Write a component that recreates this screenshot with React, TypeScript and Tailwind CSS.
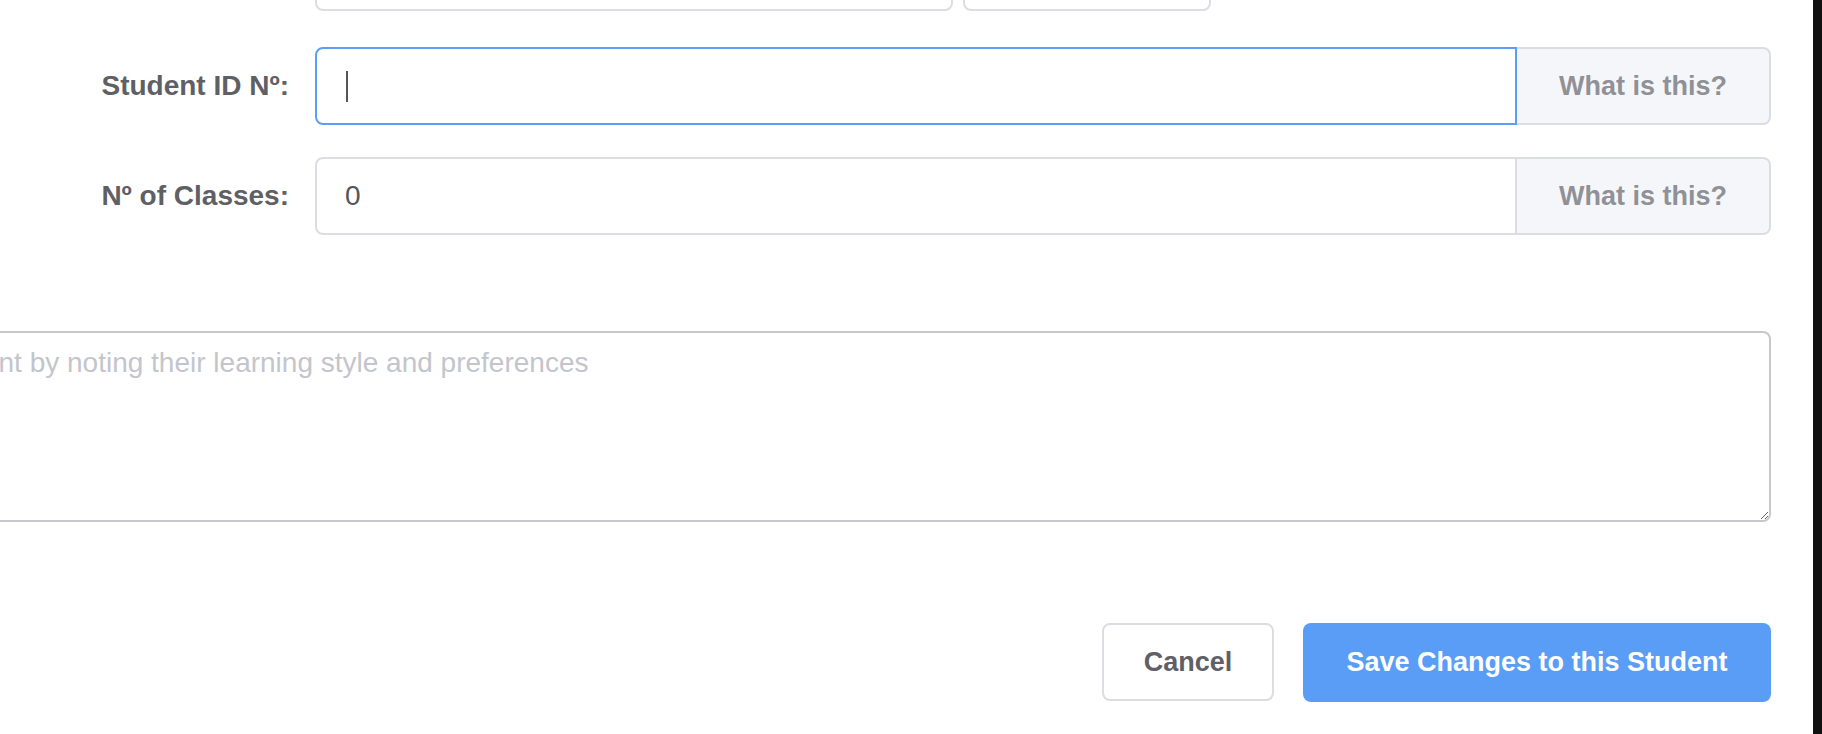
import React from "react";

function Label({ children }: { children: React.ReactNode }) {
  return (
    <div className="flex w-[700px] shrink-0 items-center justify-end pb-[1px] pr-0 text-[28px] font-bold text-[#5f6066]">
      {children}
    </div>
  );
}

function Addon() {
  return (
    <div className="flex w-[254px] shrink-0 items-center justify-center rounded-r-lg border-2 border-l-0 border-[#dcdde3] bg-[#f5f6fa] text-[27px] font-bold text-[#8f9196]">
      What is this?
    </div>
  );
}

export default function App() {
  return (
    <div className="flex h-[734px] w-full overflow-hidden bg-white font-['Liberation_Sans',Arial,sans-serif]">
      <div className="flex-1 overflow-hidden">
        <div className="ml-[-411px] mt-[-67px] flex flex-col pr-[42px]">
          {/* partially visible row above */}
          <div className="flex h-[78px]">
            <div className="w-[726px] shrink-0" />
            <div className="w-[638px] rounded-lg border-2 border-[#dcdde3]" />
            <div className="ml-[10px] w-[248px] rounded-lg border-2 border-[#dcdde3]" />
          </div>

          {/* Student ID */}
          <div className="mt-[36px] flex h-[78px]">
            <Label>Student ID Nº:</Label>
            <div className="ml-[26px] flex flex-1">
              <div className="flex flex-1 items-center rounded-l-lg border-2 border-[#5b9df7] bg-white pl-[29px]">
                <span className="block h-[31px] w-[2px] bg-[#555659]" />
              </div>
              <Addon />
            </div>
          </div>

          {/* Nº of Classes */}
          <div className="mt-[32px] flex h-[78px]">
            <Label>Nº of Classes:</Label>
            <div className="ml-[26px] flex flex-1">
              <div className="flex flex-1 items-center rounded-l-lg border-2 border-r-2 border-[#dcdde3] bg-white pl-[28px] text-[28px] text-[#55565b]">
                0
              </div>
              <Addon />
            </div>
          </div>

          {/* Notes */}
          <textarea
            className="mt-[96px] block h-[191px] w-full rounded-lg border-2 border-[#c6c8ce] bg-white pl-[34px] pr-[28px] pt-[9px] text-[28px] leading-[42px] text-[#55565b] outline-none placeholder:text-[#c3c5cc]"
            placeholder="Help us get to know this student by noting their learning style and preferences"
          />

          {/* Buttons */}
          <div className="mt-[101px] flex justify-end gap-[29px]">
            <button className="flex h-[78px] w-[172px] items-center justify-center rounded-lg border-2 border-[#dcdde3] bg-white text-[27px] font-bold text-[#5f6066]">
              Cancel
            </button>
            <button className="flex h-[79px] w-[468px] items-center justify-center rounded-lg bg-[#5a9df7] text-[27px] font-bold text-white">
              Save Changes to this Student
            </button>
          </div>
        </div>
      </div>
      <div className="w-[9px] shrink-0 bg-[#111111]" />
    </div>
  );
}
